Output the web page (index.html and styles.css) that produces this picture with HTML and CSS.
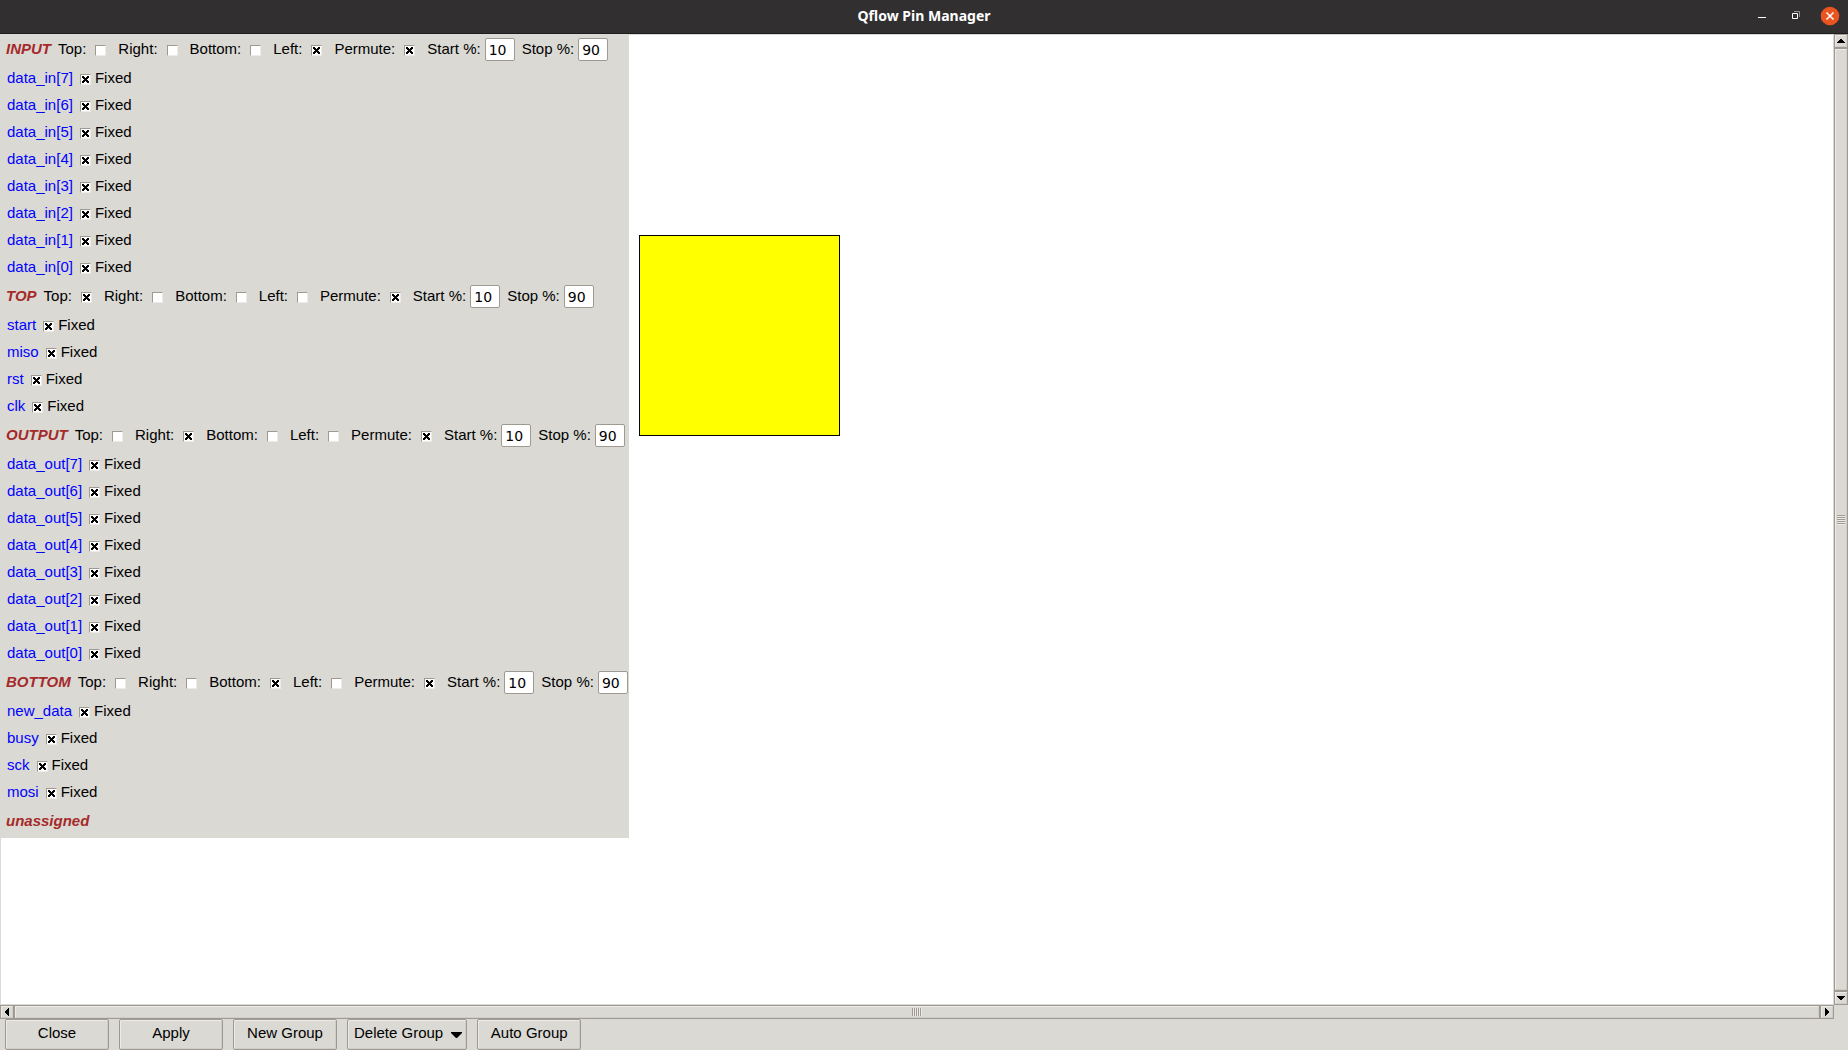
FILE: index.html
```html
<!DOCTYPE html>
<html lang="en">
<head>
<meta charset="utf-8">
<title>Qflow Pin Manager</title>
<link rel="stylesheet" href="styles.css">
</head>
<body>
<header class="titlebar">
  <h1 class="title">Qflow Pin Manager</h1>
  <div class="window-controls">
    <button class="win-btn" aria-label="Minimize"><svg width="20" height="20" viewBox="0 0 20 20"><path d="M6 11.5h8" stroke="#fff"/></svg></button>
    <button class="win-btn" aria-label="Restore"><svg width="20" height="20" viewBox="0 0 20 20" fill="none"><path d="M8 5.5h5.500v5.500" stroke="#929192"/><path d="M6.500 7.500h5v5h-5z" stroke="#fff"/></svg></button>
    <button class="win-btn close" aria-label="Close window"><svg width="20" height="20" viewBox="0 0 20 20"><circle cx="10" cy="10" r="9.300" fill="#e95420"/><path d="M6.500 6.500l7 7m0-7l-7 7" stroke="#fff" stroke-width="1.500"/></svg></button>
  </div>
</header>
<main class="workspace">
  <div class="canvas">
    <div class="pins" id="pins"></div>
    <div class="layout-block"></div>
  </div>
  <div class="scrollbar vertical">
    <button class="arrow" aria-label="Scroll up"><svg width="8" height="5" viewBox="0 0 8 5" shape-rendering="crispEdges"><path d="M3 0h2v1h1v1h1v1h1v1H0V3h1V2h1V1h1z"/></svg></button>
    <div class="thumb"><span class="grip"></span></div>
    <button class="arrow" aria-label="Scroll down"><svg width="8" height="5" viewBox="0 0 8 5" shape-rendering="crispEdges"><path d="M0 0h8v1H7v1H6v1H5v1H3V3H2V2H1V1H0z"/></svg></button>
  </div>
  <div class="scrollbar horizontal">
    <button class="arrow" aria-label="Scroll left"><svg width="5" height="8" viewBox="0 0 5 8" shape-rendering="crispEdges"><path d="M4 0v8H3V7H2V6H1V5H0V3h1V2h1V1h1V0z"/></svg></button>
    <div class="thumb"><span class="grip"></span></div>
    <button class="arrow" aria-label="Scroll right"><svg width="5" height="8" viewBox="0 0 5 8" shape-rendering="crispEdges"><path d="M0 0v8h1V7h1V6h1V5h1V3H3V2H2V1H1V0z"/></svg></button>
  </div>
</main>
<footer class="actions">
  <button class="action">Close</button>
  <button class="action">Apply</button>
  <button class="action">New Group</button>
  <button class="action menu">Delete Group <svg width="11" height="6" viewBox="0 0 11 6"><path d="M0 0h11v1L6 6H5L0 1z"/></svg></button>
  <button class="action">Auto Group</button>
</footer>
<script src="pins.js"></script>
</body>
</html>
```
FILE: pins.js
```js
const range = (name) => [7, 6, 5, 4, 3, 2, 1, 0].map((i) => `${name}[${i}]`);

const groups = [
  { name: "INPUT", side: "Left", pins: range("data_in") },
  { name: "TOP", side: "Top", pins: ["start", "miso", "rst", "clk"] },
  { name: "OUTPUT", side: "Right", pins: range("data_out") },
  { name: "BOTTOM", side: "Bottom", pins: ["new_data", "busy", "sck", "mosi"] },
];

const option = (label, checked) =>
  `<label class="option">${label}:<input class="tick" type="checkbox"${checked ? " checked" : ""}></label>`;

const percent = (label, value) =>
  `<label class="percent">${label} %:<input class="entry" type="text" value="${value}"></label>`;

const header = (g) =>
  `<div class="group-row"><h2 class="group-name">${g.name}</h2><div class="options">` +
  ["Top", "Right", "Bottom", "Left"].map((s) => option(s, s === g.side)).join("") +
  option("Permute", true) +
  `<div class="percents">${percent("Start", 10)}${percent("Stop", 90)}</div></div></div>`;

const pin = (name) =>
  `<div class="pin-row"><span class="pin-name">${name}</span>` +
  `<label class="fixed"><input class="tick" type="checkbox" checked>Fixed</label></div>`;

document.getElementById("pins").innerHTML =
  groups.map((g) => header(g) + g.pins.map(pin).join("")).join("") +
  `<div class="group-row"><h2 class="group-name">unassigned</h2></div>`;
```
FILE: styles.css
```css
* { box-sizing: border-box; }

body {
  margin: 0;
  height: 100vh;
  display: flex;
  flex-direction: column;
  background: #dad9d4;
  color: #000;
  font: 15px/20px "Liberation Sans", Arial, sans-serif;
}

button, input { font: inherit; color: inherit; margin: 0; padding: 0; }

.titlebar {
  flex: none;
  display: grid;
  grid-template-columns: 1fr auto 1fr;
  align-items: center;
  height: 34px;
  padding: 0 8px 2px;
  background: #322f31;
  border-bottom: 1px solid #1e1c1d;
}
.title {
  grid-column: 2;
  margin: 0;
  color: #fff;
  font: 700 14px/20px "Noto Sans", sans-serif;
}
.window-controls { display: flex; justify-content: flex-end; gap: 14px; }
.win-btn { width: 20px; height: 20px; border: 0; background: none; }
.win-btn svg { display: block; }

.workspace {
  flex: 1;
  min-height: 0;
  display: grid;
  grid-template-columns: 1fr 14px;
  grid-template-rows: 1fr 14px;
}
.canvas {
  display: flex;
  align-items: flex-start;
  gap: 10px;
  min-height: 0;
  overflow: hidden;
  background: #fff;
  border: 1px solid #d9d9d9;
}
.pins {
  flex: none;
  min-width: 627px;
  padding: 0 1px 0 5px;
  background: #dad9d4;
}
.group-row {
  display: flex;
  align-items: center;
  gap: 7px;
  height: 31px;
  padding-bottom: 4px;
}
.group-name {
  margin: 0;
  color: #a52a2a;
  font: italic 700 15px/20px "Liberation Sans", Arial, sans-serif;
}
.options { display: flex; align-items: center; gap: 12px; }
.option { display: flex; align-items: center; gap: 9px; }
.percents { display: flex; gap: 7px; }
.percent { display: flex; align-items: center; gap: 4px; }
.entry {
  width: 30px;
  height: 23px;
  margin-top: 2px;
  padding: 0 3px;
  background: #fff;
  border: 1px solid #9e9a91;
  border-radius: 2px;
  font: 14px/20px "DejaVu Sans", sans-serif;
}
.tick {
  appearance: none;
  flex: none;
  width: 11px;
  height: 11px;
  margin-top: 3px;
  background: #fff center / 7px 7px no-repeat;
  border: 1px solid;
  border-color: #9e9a91 #eeebe7 #eeebe7 #9e9a91;
}
.tick:checked {
  background-image: url("data:image/svg+xml,%3Csvg xmlns='http://www.w3.org/2000/svg' viewBox='0 0 7 7' shape-rendering='crispEdges'%3E%3Cpath d='M0 0h2v1h1v1h1V1h1V0h2v2H6v1H5v1h1v1h1v2H5V6H4V5H3v1H2v1H0V5h1V4h1V3H1V2H0z'/%3E%3C/svg%3E");
}
.pin-row {
  display: flex;
  align-items: center;
  gap: 7px;
  height: 27px;
  padding: 0 0 4px 1px;
}
.pin-name { color: #00f; }
.fixed { display: flex; align-items: center; gap: 4px; }

.layout-block {
  flex: none;
  width: 201px;
  height: 201px;
  margin-top: 200px;
  background: #ff0;
  border: 1px solid #000;
}

.scrollbar { display: flex; background: #9e9a91; border: 1px solid #9e9a91; gap: 2px; }
.vertical { flex-direction: column; }
.arrow, .thumb {
  display: flex;
  align-items: center;
  justify-content: center;
  background: #dad9d4;
  border: 1px solid;
  border-color: #eeebe7 #cfcdc8 #cfcdc8 #eeebe7;
}
.arrow { flex: none; width: 12px; height: 12px; }
.arrow svg { flex: none; }
.thumb { flex: 1; }
.grip { width: 10px; height: 8px; background: repeating-linear-gradient(90deg, #9e9a91 0 1px, #eeebe7 1px 2px); }
.vertical .grip { width: 8px; height: 10px; background: repeating-linear-gradient(#9e9a91 0 1px, #eeebe7 1px 2px); }

.actions { flex: none; display: flex; gap: 10px; padding: 0 5px; }
.action {
  min-width: 104px;
  height: 31px;
  padding-bottom: 3px;
  background: #dad9d4;
  border: 1px solid #9e9a91;
  border-radius: 2px;
  box-shadow: inset 1px 1px #eeebe7, inset -1px -1px #cfcdc8;
}
.menu {
  display: flex;
  align-items: center;
  justify-content: center;
  gap: 8px;
  padding: 0 4px 3px 6px;
}
.menu svg { margin-top: 3px; }
```
